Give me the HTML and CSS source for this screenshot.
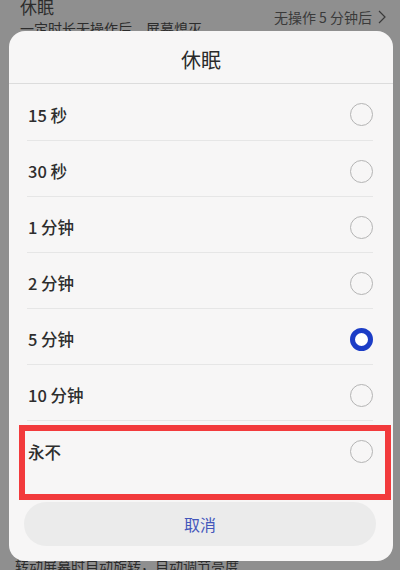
FILE: index.html
```html
<!DOCTYPE html>
<html lang="zh">
<head>
<meta charset="utf-8">
<link rel="stylesheet" href="styles.css">
</head>
<body>
<div class="screen">
  <div class="bg-page">
    <div class="bg-setting">
      <div class="bg-left">
        <div class="bg-title">休眠</div>
        <div class="bg-sub">一定时长无操作后，屏幕熄灭</div>
      </div>
      <div class="bg-value">无操作 5 分钟后
        <svg class="chev" width="8" height="14" viewBox="0 0 8 14"><polyline points="1,1 7,7 1,13" fill="none" stroke="#3a3a3a" stroke-width="1.2"/></svg>
      </div>
    </div>
    <div class="bg-bottom">转动屏幕时自动旋转，自动调节亮度</div>
  </div>

  <div class="dialog">
    <div class="dlg-title">休眠</div>
    <div class="options">
      <div class="opt"><span class="label">15 秒</span><span class="radio"></span></div>
      <div class="opt"><span class="label">30 秒</span><span class="radio"></span></div>
      <div class="opt"><span class="label">1 分钟</span><span class="radio"></span></div>
      <div class="opt"><span class="label">2 分钟</span><span class="radio"></span></div>
      <div class="opt"><span class="label">5 分钟</span><span class="radio checked"></span></div>
      <div class="opt"><span class="label">10 分钟</span><span class="radio"></span></div>
      <div class="opt last"><span class="label">永不</span><span class="radio"></span></div>
    </div>
    <div class="cancel-wrap"><div class="cancel">取消</div></div>
  </div>

  <div class="highlight"></div>
</div>
</body>
</html>
```

FILE: styles.css
```css
* { box-sizing: border-box; }
html, body {
  margin: 0;
  padding: 0;
}
body {
  font-family: "Noto Sans CJK SC", "Noto Sans", sans-serif;
}
.screen {
  position: relative;
  width: 400px;
  height: 570px;
  overflow: hidden;
  background: #8f8f8f;
}
.bg-page {
  height: 570px;
  display: flex;
  flex-direction: column;
  justify-content: space-between;
  padding: 0 14px 0 20px;
  color: #2c2c2c;
}
.bg-setting {
  display: flex;
  justify-content: space-between;
  align-items: flex-start;
}
.bg-title {
  font-size: 17px;
  line-height: 22px;
  margin-top: -4px;
}
.bg-sub {
  font-size: 14px;
  line-height: 20px;
}
.bg-value {
  font-size: 14px;
  line-height: 20px;
  margin-top: 7px;
  color: #3a3a3a;
  display: flex;
  align-items: center;
  gap: 6px;
}
.bg-bottom {
  font-size: 14px;
  line-height: 20px;
  margin-bottom: -5px;
  margin-left: -5px;
  color: #2c2c2c;
}
.dialog {
  position: absolute;
  top: 31px;
  left: 9px;
  width: 384px;
  height: 530px;
  background: #f7f6f6;
  border-radius: 16px;
  display: flex;
  flex-direction: column;
}
.dlg-title {
  height: 53px;
  display: flex;
  align-items: center;
  justify-content: center;
  font-size: 20px;
  color: #2a2a2a;
  border-bottom: 1px solid #dcdcdc;
  padding-top: 4px;
}
.options {
  display: flex;
  flex-direction: column;
}
.opt {
  height: 56px;
  margin: 0 20px 0 18px;
  display: flex;
  align-items: center;
  justify-content: space-between;
  border-bottom: 1px solid #e6e6e6;
  padding-top: 5px;
}
.opt:first-child { height: 57px; }
.opt.last { border-bottom: none; }
.label {
  font-size: 16.5px;
  font-weight: 500;
  color: #2e2e2e;
  padding-left: 1px;
}
.radio {
  width: 23px;
  height: 23px;
  border-radius: 50%;
  border: 1.5px solid #b4b4b4;
  background: transparent;
}
.radio.checked {
  border: 5px solid #1c3dc6;
  background: #fff;
}
.cancel-wrap {
  padding: 25px 17px 0 15px;
}
.cancel {
  height: 44px;
  border-radius: 22px;
  background: #ebebeb;
  display: flex;
  align-items: center;
  justify-content: center;
  font-size: 16px;
  color: #4456bb;
}
.highlight {
  position: absolute;
  left: 19px;
  top: 425px;
  width: 372px;
  height: 75px;
  border: 6.5px solid #f23a3c;
}
```
